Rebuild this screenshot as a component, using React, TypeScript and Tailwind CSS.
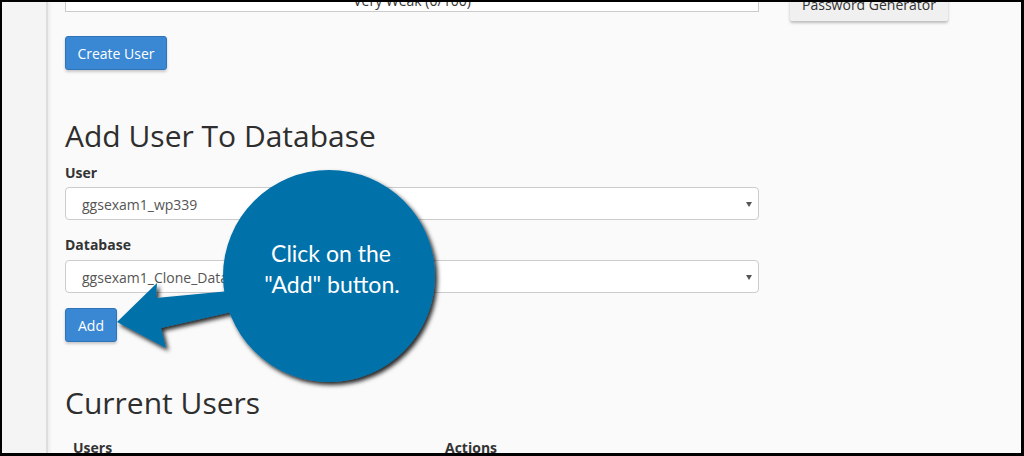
import React from "react";

const font = { fontFamily: '"Open Sans", "Liberation Sans", sans-serif' };

function SelectBox({ value }: { value: string }) {
  return (
    <div className="relative flex h-[33px] w-[694px] items-center rounded-[4px] border border-[#cccccc] bg-white pl-[16px] pt-[2px] text-[14px] text-[#555555]">
      {value}
      <span className="absolute right-[6px] top-[14px] h-0 w-0 border-l-[3px] border-r-[3px] border-t-[5px] border-l-transparent border-r-transparent border-t-[#555555]" />
    </div>
  );
}

function Callout() {
  return (
    <svg
      className="pointer-events-none absolute left-0 top-0"
      width={1019}
      height={451}
      viewBox="2 2 1019 451"
    >
      <defs>
        <filter id="shade" x="-20%" y="-20%" width="140%" height="140%">
          <feDropShadow dx="2.5" dy="3" stdDeviation="2" floodColor="#000" floodOpacity="0.85" />
        </filter>
      </defs>
      <g filter="url(#shade)" fill="#0271a9">
        <polygon points="117,322 157,283 156,298 262,288 262,305 161,328 166,348" />
        <circle cx="329" cy="276" r="106" />
      </g>
      <g fill="#ffffff" fontFamily='"Lato", "Open Sans", sans-serif' fontSize="23" textAnchor="middle">
        <text x="331" y="262">Click on the</text>
        <text x="332" y="293">"Add" button.</text>
      </g>
    </svg>
  );
}

export default function App() {
  return (
    <div
      className="relative flex h-[456px] w-[1024px] overflow-hidden border-b-[3px] border-l-2 border-r-[3px] border-t-2 border-black bg-[#fafafa] text-[#333333]"
      style={font}
    >
      {/* left rail */}
      <aside className="w-[46px] shrink-0 border-r-2 border-[#dddddd] bg-[#f4f4f4] shadow-[2px_0_3px_rgba(0,0,0,0.06)]" />

      <main className="flex-1 pl-[17px]">
        {/* password strength + generator */}
        <div className="flex items-start">
          <div className="mt-[-20px] flex h-[30px] w-[694px] items-center justify-center border border-[#cccccc] bg-white pt-[6px] text-[14px]">
            Very Weak (0/100)
          </div>
          <button className="ml-[31px] mt-[-15px] h-[34px] w-[158px] rounded-[2px] bg-[#f0f0f0] text-[14px] text-[#333333] shadow-[0_2px_3px_rgba(0,0,0,0.25)]">
            Password Generator
          </button>
        </div>

        <button className="mt-[15px] h-[34px] w-[102px] rounded-[3px] border border-[#2f74b8] bg-[#3a88d3] text-[14px] text-white shadow-[0_2px_3px_rgba(0,0,0,0.2)]">
          Create User
        </button>

        <h2 className="mt-[49px] text-[30px] font-normal leading-[33px] text-[#2e2e2e]">
          Add User To Database
        </h2>

        <label className="mt-[11px] block text-[14px] font-bold leading-[20px]">User</label>
        <div className="mt-[4px]">
          <SelectBox value="ggsexam1_wp339" />
        </div>

        <label className="mt-[15px] block text-[14px] font-bold leading-[20px]">Database</label>
        <div className="mt-[5px]">
          <SelectBox value="ggsexam1_Clone_Database" />
        </div>

        <button className="mt-[15px] h-[34px] w-[52px] rounded-[3px] border border-[#2f74b8] bg-[#3a88d3] text-[14px] text-white shadow-[0_2px_3px_rgba(0,0,0,0.2)]">
          Add
        </button>

        <h2 className="mt-[44px] text-[30px] font-normal leading-[33px] text-[#2e2e2e]">
          Current Users
        </h2>

        <table className="mt-[11px] w-[694px] text-left text-[14px]">
          <thead>
            <tr>
              <th className="w-[372px] px-2 py-2 font-bold leading-[20px]">Users</th>
              <th className="px-2 py-2 font-bold leading-[20px]">Actions</th>
            </tr>
          </thead>
        </table>
      </main>

      <Callout />
    </div>
  );
}
